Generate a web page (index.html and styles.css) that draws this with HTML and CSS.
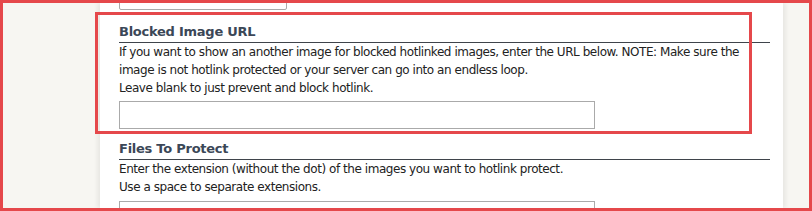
FILE: index.html
```html
<!DOCTYPE html>
<html>
<head>
<meta charset="utf-8">
<link rel="stylesheet" href="styles.css">
</head>
<body>
<div class="frame">
  <div class="panel">
    <div class="select-row">
      <div class="select">Yes, allow blank referers <span class="arrow">▾</span></div>
    </div>
    <section class="field">
      <h3 class="field-title">Blocked Image URL</h3>
      <p class="field-desc">If you want to show an another image for blocked hotlinked images, enter the URL below. NOTE: Make sure the image is not hotlink protected or your server can go into an endless loop.<br>Leave blank to just prevent and block hotlink.</p>
      <div class="input"></div>
    </section>
    <section class="field">
      <h3 class="field-title">Files To Protect</h3>
      <p class="field-desc">Enter the extension (without the dot) of the images you want to hotlink protect.<br>Use a space to separate extensions.</p>
      <div class="input"></div>
    </section>
    <div class="highlight"></div>
  </div>
</div>
</body>
</html>
```
FILE: styles.css
```css
html, body {
  margin: 0;
  padding: 0;
}
.frame {
  width: 812px;
  height: 211px;
  box-sizing: border-box;
  border: 3px solid #e5484b;
  background: #f7f6f2;
  overflow: hidden;
}
.panel {
  position: relative;
  display: flow-root;
  margin-left: 97px;
  width: 683px;
  height: 100%;
  background: #fff;
  box-shadow: -3px 0 4px rgba(0,0,0,0.06), 3px 0 4px rgba(0,0,0,0.06);
  padding: 0 13px 0 19px;
  box-sizing: border-box;
  font-family: "DejaVu Sans", sans-serif;
  font-size: 12px;
  color: #222;
}
.select-row {
  margin-top: -17px;
  height: 25px;
}
.select {
  width: 168px;
  height: 24px;
  box-sizing: border-box;
  border: 1px solid #aaa;
  border-radius: 2px;
  padding: 2px 8px;
  font-size: 12px;
  line-height: 18px;
  color: #222;
  letter-spacing: -0.3px;
  white-space: nowrap;
}
.arrow {
  font-size: 9px;
  color: #888;
  margin-left: 4px;
}
.field {
  padding-top: 11px;
}
.field + .field {
  padding-top: 10px;
}
.field-title {
  margin: 0;
  font-size: 13px;
  font-weight: bold;
  color: #3b4757;
  line-height: 19px;
  border-bottom: 1px solid #3f444b;
  padding-bottom: 1px;
  letter-spacing: -0.25px;
}
.field-desc {
  margin: 1px 0 0;
  line-height: 17.8px;
  letter-spacing: -0.45px;
}
.input {
  margin-top: 4px;
  width: 476px;
  height: 28px;
  box-sizing: border-box;
  border: 1px solid #aaa;
}
.highlight {
  position: absolute;
  left: -5px;
  top: 9px;
  width: 657px;
  height: 122px;
  box-sizing: border-box;
  border: 3px solid #e5484b;
}
```
